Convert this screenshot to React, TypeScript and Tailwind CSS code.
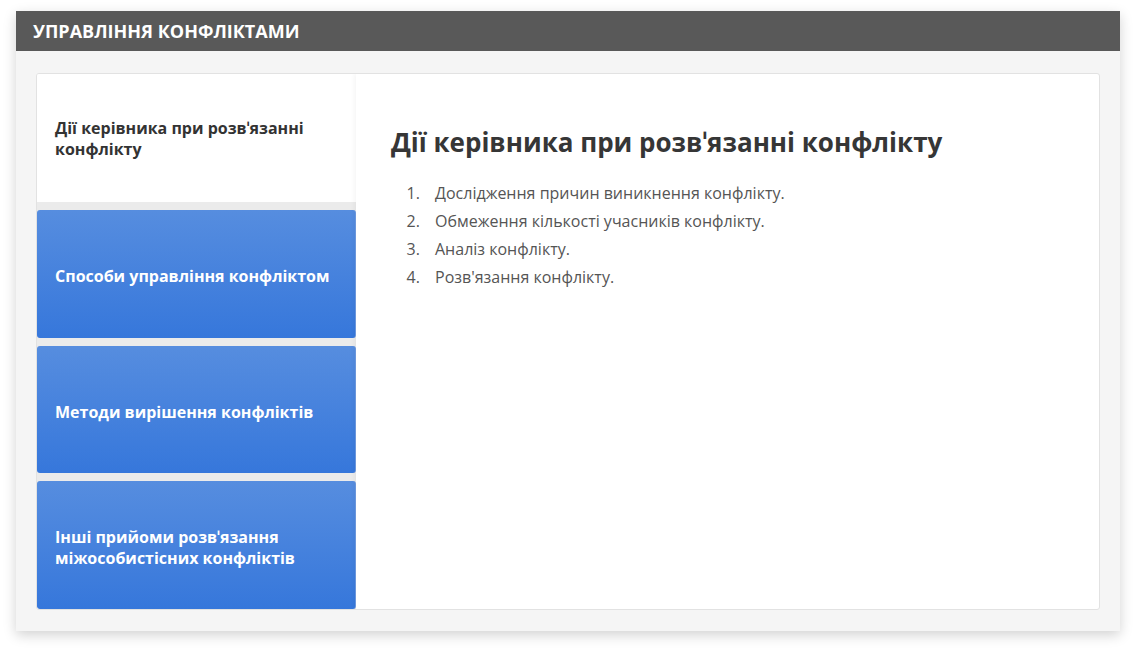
import { useState } from 'react'

const tabs = [
  'Дії керівника при розв\u02c8язанні конфлікту',
  'Способи управління конфліктом',
  'Методи вирішення конфліктів',
  'Інші прийоми розв\u02c8язання міжособистісних конфліктів',
]

const items = [
  'Дослідження причин виникнення конфлікту.',
  'Обмеження кількості учасників конфлікту.',
  'Аналіз конфлікту.',
  "Розв'язання конфлікту.",
]

export default function App() {
  const [active, setActive] = useState(0)

  return (
    <div
      className="min-h-[653px] bg-white pl-4 pt-[11px]"
      style={{ fontFamily: '"Open Sans", "Noto Sans", sans-serif' }}
    >
      <div className="w-[1104px] bg-[#f5f5f5] shadow-[0_4px_12px_rgba(0,0,0,0.18)]">
        <div className="flex h-10 items-center bg-[#595959] px-[17px] text-[18px] font-bold text-white">
          УПРАВЛІННЯ КОНФЛІКТАМИ
        </div>
        <div className="px-5 pb-[21px] pt-[22px]">
          <div className="flex h-[537px] overflow-hidden rounded-[3px] border border-[#e2e2e2] bg-white">
            <div className="flex w-[319px] shrink-0 flex-col gap-2 bg-[#ebebeb]">
              {tabs.map((t, i) =>
                i === active ? (
                  <button
                    key={t}
                    onClick={() => setActive(i)}
                    className="flex h-[128px] items-center bg-white px-[18px] pt-[2px] text-left text-[16px] font-bold leading-[21px] text-[#333]"
                  >
                    {t}
                  </button>
                ) : (
                  <button
                    key={t}
                    onClick={() => setActive(i)}
                    className="flex h-[128px] items-center rounded-[3px] border-r border-[#6f9be2] bg-gradient-to-b from-[#568ddf] to-[#3677db] px-[18px] pt-[6px] text-left text-[16px] font-bold leading-[21px] text-white"
                  >
                    {t}
                  </button>
                ),
              )}
            </div>
            <div className="flex-1 pl-[35px] pt-[50px] shadow-[-2px_0_4px_rgba(0,0,0,0.04)]">
              <h2 className="text-[26px] font-bold leading-9 text-[#363636]">{tabs[active]}</h2>
              <ol className="mt-[19px] list-decimal pl-[33px] text-[16px] leading-[28px] text-[#555] marker:text-[#555]">
                {items.map((it) => (
                  <li key={it} className="pl-[11px]">
                    {it}
                  </li>
                ))}
              </ol>
            </div>
          </div>
        </div>
      </div>
    </div>
  )
}
